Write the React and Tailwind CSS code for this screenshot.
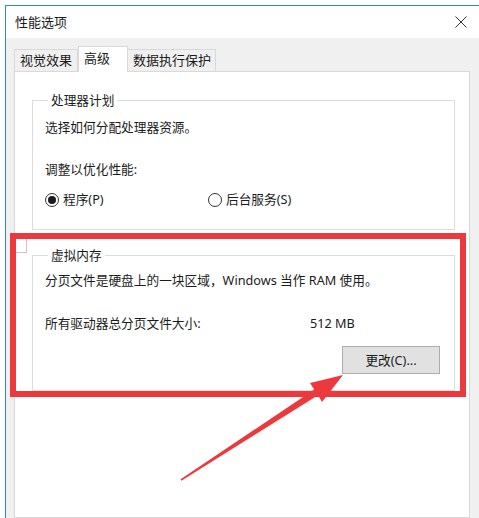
import React from "react";

function Radio({ checked, label }) {
  return (
    <div className="flex items-center">
      <span className="w-[14px] h-[14px] rounded-full border border-[#333] bg-white flex items-center justify-center">
        {checked && <span className="w-[8px] h-[8px] rounded-full bg-[#1b1b1b]" />}
      </span>
      <span className="ml-[4px]">{label}</span>
    </div>
  );
}

export default function App() {
  return (
    <div className="relative w-[479px] h-[518px] overflow-hidden bg-white text-[12.7px] leading-[17px] text-[#1b1b1b] font-['Noto_Sans','Noto_Sans_CJK_SC',sans-serif]">
      {/* Window */}
      <div className="ml-[5px] mt-[5px] h-[513px] border-l border-t border-[#2f86d6] flex flex-col">
        {/* Title bar */}
        <div className="h-[32px] bg-white flex items-center justify-between pl-[9px] pr-[12px]">
          <span className="text-[13px]">性能选项</span>
          <svg className="w-[12px] h-[12px]" viewBox="0 0 12 12" fill="none" stroke="#333" strokeWidth={1}>
            <path d="M0.5 0.5 11.5 11.5M11.5 0.5 0.5 11.5" />
          </svg>
        </div>

        {/* Body */}
        <div className="flex-1 bg-[#f0f0f0] pl-[8px] pt-[8px] flex flex-col">
          {/* Tabs */}
          <div className="flex items-end h-[25px] text-[13px]">
            <div className="w-[64px] h-[22px] border border-b-0 border-[#d9d9d9] bg-[#f0f0f0] flex items-center justify-center">
              视觉效果
            </div>
            <div className="relative z-10 -mb-px w-[50px] h-[26px] border border-b-0 border-[#d9d9d9] bg-white flex items-center pl-[5px] pb-[2px]">
              高级
            </div>
            <div className="w-[88px] h-[22px] border border-b-0 border-l-0 border-[#d9d9d9] bg-[#f0f0f0] flex items-center pl-[5px]">
              数据执行保护
            </div>
          </div>

          {/* Panel */}
          <div className="flex-1 w-[456px] bg-white border border-[#d9d9d9] pl-[17px] pt-[20px]">
            <fieldset className="w-[423px] border border-[#dcdcdc] pl-[12px] pb-[21px]">
              <legend className="ml-[3px] px-[3px]">处理器计划</legend>
              <p className="mt-[10px]">选择如何分配处理器资源。</p>
              <p className="mt-[25px]">调整以优化性能:</p>
              <div className="mt-[13px] flex">
                <div className="w-[163px]">
                  <Radio checked label="程序(P)" />
                </div>
                <Radio label="后台服务(S)" />
              </div>
            </fieldset>

            <fieldset className="mt-[17px] w-[423px] border border-[#dcdcdc] pl-[12px] pr-[14px] pb-[16px]">
              <legend className="ml-[3px] px-[3px]">虚拟内存</legend>
              <p className="mt-[8px]">分页文件是硬盘上的一块区域，Windows 当作 RAM 使用。</p>
              <div className="mt-[26px] flex">
                <span className="w-[265px]">所有驱动器总分页文件大小:</span>
                <span>512 MB</span>
              </div>
              <div className="mt-[14px] flex justify-end">
                <button className="w-[98px] h-[28px] bg-[#e1e1e1] border border-[#adadad] text-[12.7px] leading-[17px] text-[#1b1b1b]">
                  更改(C)...
                </button>
              </div>
            </fieldset>
          </div>
        </div>
      </div>

      {/* Annotation: red frame */}
      <div className="absolute left-[10px] top-[233px] w-[456px] h-[164px] border-[6px] border-[#ec393e]" />
      <div className="absolute left-[16px] top-[239px] w-[11px] h-[14px] border-r border-b border-[#d8bcc1]" />

      {/* Annotation: arrow */}
      <svg className="absolute inset-0 w-[479px] h-[518px] pointer-events-none" viewBox="0 0 479 518">
        <polygon
          fill="#ec393e"
          points="343,375 322,402 318,395.3 181.4,480.7 180.6,479.3 314.2,389.5 310,383"
        />
      </svg>
    </div>
  );
}
